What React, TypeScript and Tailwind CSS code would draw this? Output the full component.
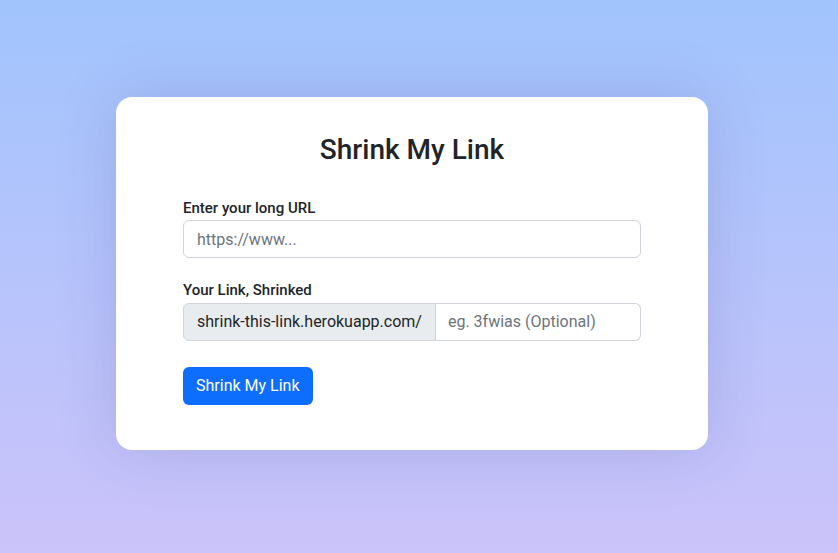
import React from "react";

export default function App() {
  return (
    <div
      className="min-h-[553px] w-full flex items-center justify-center pr-[14px] pb-[6px] bg-gradient-to-b from-[#a1c4fd] to-[#cbc3fa]"
      style={{ fontFamily: 'Roboto, "Noto Sans", sans-serif' }}
    >
      <div className="w-[592px] h-[353px] bg-white rounded-[16px] shadow-[0_0_60px_rgba(60,60,140,0.18)] px-[67px] pt-[36px] pb-[45px]">
        <h1 className="text-center text-[28px] leading-[34px] font-medium text-[#212529]">
          Shrink My Link
        </h1>

        <form className="mt-[29px]" onSubmit={(e) => e.preventDefault()}>
          <label className="block text-[15px] leading-[24px] font-medium text-[#212529]">
            Enter your long URL
          </label>
          <input
            type="text"
            placeholder="https://www..."
            className="block w-full h-[38px] px-[13px] text-[16px] text-[#212529] border border-[#ced4da] rounded-[6px] placeholder:text-[#6c757d] outline-none"
          />

          <label className="block mt-[20px] mb-px text-[15px] leading-[24px] font-medium text-[#212529]">
            Your Link, Shrinked
          </label>
          <div className="flex w-full h-[38px]">
            <span className="flex items-center px-[13px] bg-[#e9ecef] border border-[#ced4da] rounded-l-[6px] text-[16px] text-[#212529] whitespace-nowrap">
              shrink-this-link.herokuapp.com/
            </span>
            <input
              type="text"
              placeholder="eg. 3fwias (Optional)"
              className="flex-1 min-w-0 px-[12px] text-[16px] text-[#212529] border border-l-0 border-[#ced4da] rounded-r-[6px] placeholder:text-[#6c757d] outline-none"
            />
          </div>

          <button
            type="submit"
            className="mt-[26px] h-[38px] px-[13px] bg-[#0d6efd] text-white text-[16px] rounded-[6px]"
          >
            Shrink My Link
          </button>
        </form>
      </div>
    </div>
  );
}
